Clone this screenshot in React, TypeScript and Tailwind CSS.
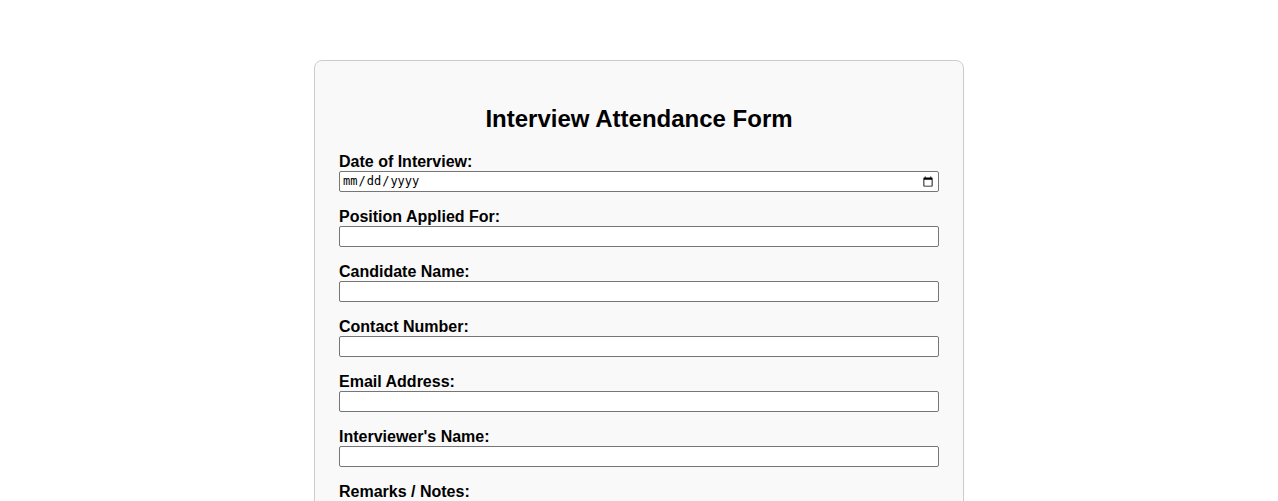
import React from "react"

const fields = [
    { id: "position", label: "Position Applied For:", type: "text" },
    { id: "candidate", label: "Candidate Name:", type: "text" },
    { id: "contact", label: "Contact Number:", type: "tel" },
    { id: "email", label: "Email Address:", type: "email" },
    { id: "interviewer", label: "Interviewer's Name:", type: "text" },
]

export default function App() {
    return (
        <div className="min-h-screen bg-white pt-[60px] pb-10 font-['Liberation_Sans',Arial,sans-serif] text-black">
            <form className="mx-auto w-[650px] rounded-[8px] border border-[#cccccc] bg-[#f9f9f9] px-[24px] pt-[24px] pb-[24px]">
                <h2 className="mt-[20px] mb-[20px] text-center text-[24px] font-bold leading-[28px]">Interview Attendance Form</h2>

                <label htmlFor="date" className="block text-[16px] font-bold leading-[18px]">Date of Interview:</label>
                <input
                    id="date"
                    type="date"
                    className="mb-[16px] block h-[21px] w-full rounded-[2px] border border-[#767676] bg-white px-[2px] font-['DejaVu_Sans_Mono',monospace] text-[12px] leading-[17px]"
                />

                {fields.map((field) => {
                    return <div key={field.id}>
                        <label htmlFor={field.id} className="block text-[16px] font-bold leading-[18px]">{field.label}</label>
                        <input
                            id={field.id}
                            type={field.type}
                            className="mb-[16px] block h-[21px] w-full rounded-[2px] border border-[#767676] bg-white px-[2px] text-[13px]"
                        />
                    </div>
                })}

                <label htmlFor="remarks" className="block text-[16px] font-bold leading-[18px]">Remarks / Notes:</label>
                <textarea
                    id="remarks"
                    rows={4}
                    className="mb-[16px] block w-full rounded-[2px] border border-[#767676] bg-white px-[2px] text-[13px]"
                />

                <button type="submit" className="rounded-[4px] bg-[#4caf50] px-4 py-2 text-[16px] text-white">Submit</button>
            </form>
        </div>
    )
}
